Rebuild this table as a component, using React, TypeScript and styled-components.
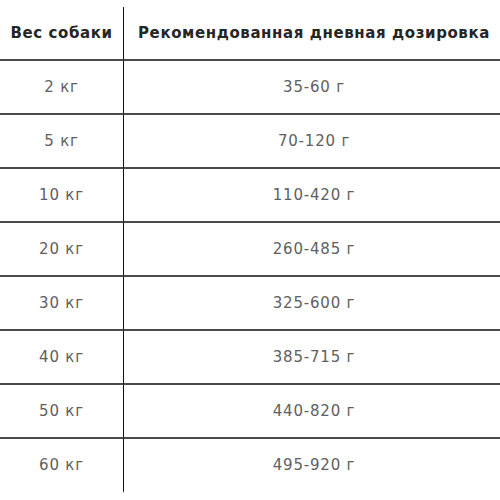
import React from 'react';
import styled, { createGlobalStyle } from 'styled-components';

const GlobalStyle = createGlobalStyle`
  html, body {
    margin: 0;
    padding: 0;
    background: #fff;
    overflow: hidden;
  }
`;

const rows = [
  { weight: '2 кг', dose: '35-60 г' },
  { weight: '5 кг', dose: '70-120 г' },
  { weight: '10 кг', dose: '110-420 г' },
  { weight: '20 кг', dose: '260-485 г' },
  { weight: '30 кг', dose: '325-600 г' },
  { weight: '40 кг', dose: '385-715 г' },
  { weight: '50 кг', dose: '440-820 г' },
  { weight: '60 кг', dose: '495-920 г' },
];

const Wrap = styled.div`
  padding-top: 7px;
  width: 504px;
`;

const Table = styled.div`
  display: grid;
  grid-template-columns: 124px 1fr;
  font-family: 'DejaVu Sans', 'Noto Sans', sans-serif;
`;

const Cell = styled.div<{ $head?: boolean; $first?: boolean; $last?: boolean }>`
  display: flex;
  align-items: center;
  justify-content: center;
  height: 52px;
  border-bottom: ${(p) => (p.$last ? '2px solid transparent' : '2px solid #4a4a4a')};
  border-right: ${(p) => (p.$first ? '1px solid #111' : 'none')};
  font-size: 15px;
  font-weight: ${(p) => (p.$head ? 700 : 400)};
  letter-spacing: ${(p) => (p.$head ? '0.6px' : '0.8px')};
  color: ${(p) => (p.$head ? '#262626' : '#606060')};
  white-space: nowrap;
`;

function App() {
  return (
    <Wrap>
      <GlobalStyle />
      <Table>
        <Cell $head $first>Вес собаки</Cell>
        <Cell $head>Рекомендованная дневная дозировка</Cell>
        {rows.map((r, i) => (
          <React.Fragment key={r.weight}>
            <Cell $first $last={i === rows.length - 1}>{r.weight}</Cell>
            <Cell $last={i === rows.length - 1}>{r.dose}</Cell>
          </React.Fragment>
        ))}
      </Table>
    </Wrap>
  );
}

export default App;
